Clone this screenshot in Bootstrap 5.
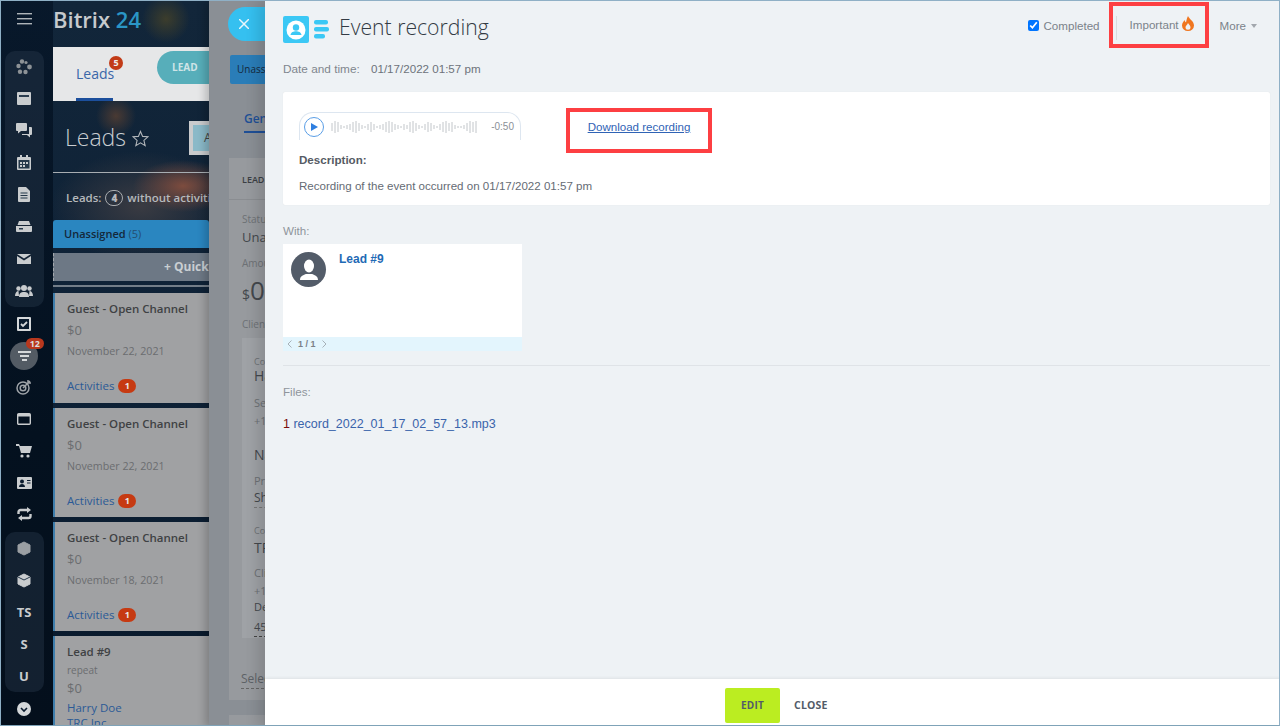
<!DOCTYPE html>
<html lang="en">
<head>
<meta charset="utf-8">
<title>Event recording</title>
<link rel="stylesheet" href="https://cdn.jsdelivr.net/npm/bootstrap@5.3.0/dist/css/bootstrap.min.css">
<style>
html,body{height:100%;margin:0;overflow:hidden}
body{font-family:"Liberation Sans",Arial,sans-serif;font-size:12px;background:#0b1e33}
.shell{width:1280px;height:726px;position:relative;overflow:hidden;border:1px solid #8fb0c6;border-bottom-color:#7fa3b8;
 background:radial-gradient(circle at 165px 18px,#3c3d2c 0,transparent 24px),radial-gradient(circle at 115px 115px,#4a3a33 0,transparent 20px),radial-gradient(ellipse 50px 26px at 182px 185px,#7d4c3e 0,transparent 100%),radial-gradient(ellipse 90px 55px at 140px 205px,#3a3b42 0,transparent 100%),linear-gradient(180deg,#12263a,#0d2035 60%,#08182a)}
.rail{width:52px;background:linear-gradient(180deg,rgba(5,20,38,.75),#04111f 60%,#040f1c);color:#d5d8da;flex:none;padding-top:8px}
.burger{height:20px;margin:4px 0 18px}
.railgroup{width:39px;margin-left:4px;background:rgba(40,58,76,.42);border-radius:10px;padding:0}
.railitem{height:32px;width:38px;font:700 13px "Open Sans",sans-serif;color:#c9ccce}
.railsolo{margin-left:4px}
.firstsolo{margin-top:1px}
.secondgroup{margin-top:2px}
.filterdot{width:28px;height:28px;border-radius:50%;background:#535b64;position:relative}
.countpill{position:absolute;top:-4px;right:-6px;background:#b8381e;color:#ddd;border-radius:8px;font:700 9px/11px "Open Sans",sans-serif;padding:0 4px}
.crm{width:156px;flex:none;font-family:"Open Sans",sans-serif;overflow:hidden}
.logo{height:46px;font:600 22px/36px "Open Sans",sans-serif;color:#c6cacd;white-space:nowrap}
.logo span{color:#2a96c6}
.tabsbar{height:54px;background:#e6e7e8;position:relative;padding:18px 0 0 23px}
.tabname{color:#3a66a8;font-size:14px;line-height:18px;position:relative}
.tabline{height:3px;width:37px;background:#1c4f9c;position:absolute;left:23px;bottom:0}
.tabbadge{position:absolute;left:56px;top:9px;width:14px;height:14px;border-radius:50%;background:#c23b17;color:#eee;font:700 9px/14px "Open Sans",sans-serif;text-align:center}
.leadpill{position:absolute;left:104px;top:4px;width:70px;height:33px;background:#57aeba;border-radius:17px;color:#cfe4e7;font:700 10px/33px "Open Sans",sans-serif;padding-left:15px}
.bigtitle{font:300 23px/32px "Open Sans",sans-serif;color:#c9cdd1;height:72px;padding:20px 0 0 12px;border-bottom:1px solid #a8adb2;position:relative}
.abox{position:absolute;left:136px;top:20px;width:40px;height:34px;background:#8ab9c8;border:4px solid #c9cbcd;color:#444;font:12px/26px "Open Sans",sans-serif;padding-left:11px}
.infoline{color:#b6b9bc;font-size:11.5px;font-weight:600;height:47px;padding:16px 0 0 13px;white-space:nowrap}
.infoline b{display:inline-block;border:1px solid #a9acaf;border-radius:10px;padding:0 5px;font-size:10px;line-height:14px;margin:0 1px}
.stagehead{height:28px;background:#2a86c0;border-radius:3px 3px 0 0;color:#14283a;font-size:11px;font-weight:600;line-height:28px;padding-left:11px}
.stagehead span{font-weight:400;color:#244e70}
.quickadd{height:28px;margin-top:5px;background:#6d7885;color:#c9ced2;font-size:12px;font-weight:700;line-height:28px;padding-left:110px;border-left:1px dashed #a3a8ad;white-space:nowrap}
.thinline{height:2px;background:#737d88;margin:4px 0 6px}
.dealcard{background:#a0a1a3;border-left:2px solid #3f7eac;padding:8px 0 0 12px;height:110px;margin-bottom:5px;color:#6b6d70;font-size:10.7px;white-space:nowrap;position:relative}
.dealcard strong{display:block;color:#3f4144;font-weight:600;font-size:11.5px;line-height:16px;margin-bottom:5px}
.dealcard p{margin:0 0 5px;line-height:16px}
.dealsum{font-size:13px}
.actline{position:absolute;left:12px;top:85px;color:#2b5a96;line-height:16px;font-size:11.5px}
.actline i{display:inline-block;width:18px;height:14px;border-radius:7px;background:#c63a12;color:#e9e9e9;font:700 9px/14px "Open Sans",sans-serif;text-align:center;margin-left:1px;vertical-align:1px}
.dealcard a{color:#2b5a96;font-size:11.5px;line-height:15px}
.middle{position:absolute;left:208px;top:0;width:60px;height:726px;background:#8a8f95;box-shadow:-4px 0 8px rgba(0,0,0,.2);overflow:hidden;font-family:"Open Sans",sans-serif;color:#55595e}
.midtext{position:absolute;left:45px;white-space:nowrap;color:#6d7175;font-size:11px}
.middark{color:#44484d}
.closepill{position:absolute;left:19px;top:6px;width:60px;height:34px;background:#35c0f0;border-radius:17px 0 0 17px;color:#eaf6fb;padding-left:11px;display:flex;align-items:center}
.unasschip{position:absolute;left:21px;top:54px;width:60px;height:29px;background:#2a7db8;border-radius:2px;font-size:10px;line-height:29px;padding-left:7px;color:#15293c;white-space:nowrap}
.gentab{position:absolute;left:35px;top:109px;font-size:12px;color:#1f4f96;font-weight:600}
.genline{position:absolute;left:35px;top:130px;width:30px;height:2px;background:#1f4f96}
.midcard{position:absolute;left:20px;top:157px;width:60px;height:542px;background:#979a9e}
.midcard div{position:absolute;left:13px;white-space:nowrap}
.midinner{position:absolute;left:33px;top:337px;width:40px;height:300px;background:#9fa2a6}
.midnext{position:absolute;left:20px;top:714px;width:60px;height:20px;background:#979a9e}
.mainpanel{position:absolute;left:264px;top:0;width:1016px;height:726px;background:#eef2f5;box-shadow:-8px 0 12px rgba(0,0,0,.12);color:#59606a}
.paneltop{padding:0 24px 0 18px;height:48px}
.appicon{width:26px;height:27px;background:#3bc8f5;border-radius:2px;margin-top:15px}
.applines{margin:19px 0 0 5px}
.panelname{font:300 21.200px/30px "Open Sans",sans-serif;color:#333b44;margin:11px 0 0 10px;white-space:nowrap}
.ctrltext{color:#7b828a;font-size:11.6px}
.ctrlcheck{width:11px;height:11px;margin:0 5px 0 0}
.ctrlopt{margin-top:16px}
.redframe{border:4px solid #fd3f42}
.impframe{width:100px;height:46px;margin:1px 0 0 9px;padding-left:17px;position:relative}
.impframe span{margin-top:-1px}
.flame{margin:-3px 0 0 3px}
.impframe::before{content:"";position:absolute;left:3px;top:10px;height:24px;width:1px;background:#d8dce0}
.caretmark{display:inline-block;width:0;height:0;border:3.5px solid transparent;border-top:4px solid #a2a7ad;border-bottom:0;margin-left:5px;vertical-align:2px}
.moreitem{margin:16px 0 0 11px}
.datefield{padding:12px 0 0 18px;height:43px;color:#80868e;line-height:16px;font-size:11.8px}
.datevalue{color:#6d737b;font-size:11.6px;margin-left:8px}
.eventbox{margin:0 11px 0 18px;height:113px;background:#fff;border:0;border-radius:2px;padding:20px 16px 0;box-shadow:0 0 1px rgba(0,0,0,.1)}
.playerbar{width:222px;height:28px;border:1px solid #dde6f0;border-bottom:0;border-radius:14px 14px 0 0;padding:0 6px 0 4px}
.playbtn{width:20px;height:20px;border:1px solid #5a9ee6;border-radius:50%;flex:none;background:#fff}
.waveform{margin-left:7px;flex:none}
.remain{font-size:10px;color:#8b9097;margin-left:auto}
.downframe{width:146px;height:45px;margin:-4px 0 0 45px;line-height:30px;text-align:center;flex:none}
.downframe a{color:#2f63b5;font-size:11.550px}
.desctitle{font-weight:700;color:#555b64;line-height:16px;font-size:11.6px;margin-top:-1px}
.desctext{margin-top:10px;line-height:16px;color:#656b74;font-size:11.570px}
.fieldlabel{color:#8f959c;line-height:16px;font-size:11.6px}
.withlabel{padding:18px 0 0 18px;height:39px}
.contactbox{width:239px;height:107px;margin-left:18px;background:#fff;position:relative;display:flex;flex-direction:column}
.contactbody{height:93px;padding:8px;display:flex}
.avatarcircle{width:35px;height:35px;border-radius:50%;background:#535c69;flex:none}
.contactname{color:#1f6ab5;font-weight:700;margin-left:13px;line-height:14px}
.pagerstrip{height:14px;background:#e3f5fd;color:#7b8086;font-size:9px;font-weight:700;line-height:14px;padding-left:4px;gap:6px}
.splitline{margin:14px 11px 0 18px;height:1px;background:#dfe3e7}
.fileslabel{padding:18px 0 0 18px;height:50px}
.fileline{padding-left:18px;line-height:16px;font-size:12.5px;color:#7a0c0c}
.fileline a{color:#3a64ab;text-decoration:none}
.panelfoot{position:absolute;left:0;right:0;top:678px;height:48px;background:#fff;box-shadow:0 -1px 3px rgba(0,0,0,.07);padding-left:460px;padding-top:9px}
.editbtn{width:55px;height:35px;background:#bbed21;border:0;border-radius:2px;color:#535c69;font:700 10px/35px "Open Sans",sans-serif;padding:0;letter-spacing:.2px}
.closebtn{margin-left:14px;color:#535c69;font:700 10.500px/35px "Open Sans",sans-serif;letter-spacing:.2px}
</style>
</head>
<body>
<div class="shell d-flex">
  <div class="rail d-flex flex-column align-items-start">
    <div class="burger d-flex justify-content-center" style="width:46px">
      <svg width="15" height="12" viewBox="0 0 15 12" fill="#aeb4b9"><rect width="15" height="1.4"/><rect y="5" width="15" height="1.4"/><rect y="10" width="15" height="1.4"/></svg>
    </div>
    <div class="railgroup">
      <div class="railitem d-flex align-items-center justify-content-center"><svg width="16" height="16" viewBox="0 0 16 16" fill="#8d9296"><circle cx="6" cy="2.500" r="2.200"/><circle cx="2.500" cy="7" r="2.200"/><circle cx="4" cy="12.800" r="2.200"/><circle cx="9.500" cy="13" r="2.200"/><circle cx="13.500" cy="8" r="2.400"/><circle cx="10" cy="3.500" r="1.600"/></svg></div>
      <div class="railitem d-flex align-items-center justify-content-center"><svg width="14" height="13" viewBox="0 0 14 13"><rect width="14" height="13" rx="1" fill="#c9ccce"/><rect x="2" y="3" width="10" height="2" fill="#2b3c4e"/></svg></div>
      <div class="railitem d-flex align-items-center justify-content-center"><svg width="16" height="15" viewBox="0 0 16 15" fill="#c9ccce"><path d="M1 0h9a1 1 0 0 1 1 1v6a1 1 0 0 1-1 1H5L2 10.500V8H1a1 1 0 0 1-1-1V1a1 1 0 0 1 1-1z"/><path d="M13 4h2a1 1 0 0 1 1 1v6a1 1 0 0 1-1 1h-1v2.500L11 12H6v-1h7z"/></svg></div>
      <div class="railitem d-flex align-items-center justify-content-center"><svg width="14" height="15" viewBox="0 0 14 15"><rect y="2" width="14" height="13" rx="1" fill="#c9ccce"/><rect x="3" width="2" height="3" fill="#c9ccce"/><rect x="9" width="2" height="3" fill="#c9ccce"/><rect x="1.500" y="5" width="11" height="8.500" fill="#25384a"/><path d="M3 7h2v2H3zM6 7h2v2H6zM9 7h2v2H9zM3 10h2v2H3zM6 10h2v2H6z" fill="#c9ccce"/></svg></div>
      <div class="railitem d-flex align-items-center justify-content-center"><svg width="12" height="15" viewBox="0 0 12 15"><path d="M1 0h7l4 4v10a1 1 0 0 1-1 1H1a1 1 0 0 1-1-1V1a1 1 0 0 1 1-1z" fill="#c9ccce"/><path d="M2.500 6h7M2.500 8.500h7M2.500 11h7" stroke="#25384a" stroke-width="1.100"/></svg></div>
      <div class="railitem d-flex align-items-center justify-content-center"><svg width="16" height="11" viewBox="0 0 16 11" fill="#c9ccce"><path d="M3 0h10l1.500 4h-13z"/><path d="M0 5h16v5a1 1 0 0 1-1 1H1a1 1 0 0 1-1-1z"/><rect x="3" y="7" width="4" height="1.500" fill="#25384a"/></svg></div>
      <div class="railitem d-flex align-items-center justify-content-center"><svg width="14" height="10" viewBox="0 0 14 10" fill="#c9ccce"><path d="M0 0h14L7 4.500z"/><path d="M0 2l7 4.500L14 2v8H0z"/></svg></div>
      <div class="railitem d-flex align-items-center justify-content-center"><svg width="18" height="12" viewBox="0 0 18 12" fill="#c9ccce"><circle cx="9" cy="3" r="3"/><path d="M4 12c0-4 2-5 5-5s5 1 5 5z"/><circle cx="3.500" cy="3.500" r="2.200"/><circle cx="14.500" cy="3.500" r="2.200"/><path d="M0 11c0-3 1.500-5 3.500-5l.5 5zM18 11c0-3-1.500-5-3.500-5l-.5 5z"/></svg></div>
    </div>
    <div class="railitem railsolo firstsolo d-flex align-items-center justify-content-center"><svg width="14" height="14" viewBox="0 0 14 14"><rect width="14" height="14" rx="1" fill="#d5d8da"/><rect x="2" y="2" width="10" height="10" fill="#0a1b2e"/><path d="M4 7l2 2 4-4" stroke="#d5d8da" stroke-width="1.800" fill="none"/></svg></div>
    <div class="railitem railsolo d-flex align-items-center justify-content-center"><div class="filterdot d-flex align-items-center justify-content-center"><svg width="13" height="10" viewBox="0 0 13 10" fill="#d5d8da"><rect width="13" height="2"/><rect x="2" y="4" width="9" height="2"/><rect x="4" y="8" width="5" height="2"/></svg><span class="countpill">12</span></div></div>
    <div class="railitem railsolo d-flex align-items-center justify-content-center"><svg width="16" height="16" viewBox="0 0 16 16" fill="none" stroke="#9ea3a8" stroke-width="1.500"><circle cx="7" cy="9" r="6"/><circle cx="7" cy="9" r="2.800"/><path d="M7 9l7-7M12 1v3h3"/></svg></div>
    <div class="railitem railsolo d-flex align-items-center justify-content-center"><svg width="14" height="12" viewBox="0 0 14 12"><rect x=".7" y=".7" width="12.600" height="10.600" rx="1" fill="none" stroke="#c9ccce" stroke-width="1.400"/><rect x="1" y="1" width="12" height="2.500" fill="#c9ccce"/></svg></div>
    <div class="railitem railsolo d-flex align-items-center justify-content-center"><svg width="16" height="14" viewBox="0 0 16 14" fill="#c9ccce"><path d="M0 0h3l1 2h12l-2 7H5L3 2H0z"/><circle cx="6" cy="12" r="1.600"/><circle cx="12" cy="12" r="1.600"/></svg></div>
    <div class="railitem railsolo d-flex align-items-center justify-content-center"><svg width="15" height="12" viewBox="0 0 15 12"><rect width="15" height="12" rx="1" fill="#c9ccce"/><circle cx="5" cy="4.500" r="2" fill="#0a1b2e"/><path d="M2 10c0-2 1.500-3 3-3s3 1 3 3z" fill="#0a1b2e"/><path d="M10 3.500h3.500M10 6h3.500" stroke="#0a1b2e" stroke-width="1.200"/></svg></div>
    <div class="railitem railsolo d-flex align-items-center justify-content-center"><svg width="15" height="14" viewBox="0 0 15 14" fill="none" stroke="#c9ccce" stroke-width="2.400"><path d="M1.500 7V5a2 2 0 0 1 2-2h7"/><path d="M13.500 7v2a2 2 0 0 1-2 2h-7"/><path d="M10 0l4 3-4 3zM5 8l-4 3 4 3z" fill="#c9ccce" stroke="none"/></svg></div>
    <div class="railgroup secondgroup">
      <div class="railitem d-flex align-items-center justify-content-center"><svg width="14" height="15" viewBox="0 0 14 15" fill="#9b9fa3" stroke="#9b9fa3" stroke-linejoin="round"><path d="M7 1l6 3v7l-6 3-6-3V4z"/></svg></div>
      <div class="railitem d-flex align-items-center justify-content-center"><svg width="14" height="15" viewBox="0 0 14 15"><path d="M7 1l6 3v7l-6 3-6-3V4z" fill="#c9ccce" stroke="#c9ccce" stroke-linejoin="round"/><path d="M1 4l6 3 6-3" stroke="#25384a" fill="none"/></svg></div>
      <div class="railitem d-flex align-items-center justify-content-center">TS</div>
      <div class="railitem d-flex align-items-center justify-content-center">S</div>
      <div class="railitem d-flex align-items-center justify-content-center">U</div>
    </div>
    <div class="railitem railsolo firstsolo d-flex align-items-center justify-content-center"><svg width="14" height="14" viewBox="0 0 14 14"><circle cx="7" cy="7" r="7" fill="#d5d8da"/><path d="M4 6l3 3 3-3" stroke="#0a1b2e" stroke-width="1.600" fill="none"/></svg></div>
  </div>

  <div class="crm">
    <div class="logo">Bitrix <span>24</span></div>
    <div class="tabsbar">
      <div class="tabname">Leads</div><div class="tabline"></div><div class="tabbadge">5</div><div class="leadpill">LEAD</div>
    </div>
    <div class="bigtitle">Leads <svg width="17" height="17" viewBox="0 0 24 24" fill="none" stroke="#b4b8bc" stroke-width="1.500" style="vertical-align:-1px"><path d="M12 2l3 7 7.500.6-5.700 5 1.800 7.400L12 18l-6.600 4 1.800-7.400-5.700-5L9 9z"/></svg><div class="abox">A</div></div>
    <div class="infoline">Leads: <b>4</b> without activities</div>
    <div class="stagehead">Unassigned <span>(5)</span></div>
    <div class="quickadd">+ Quick</div>
    <div class="thinline"></div>
    <div class="dealcard"><strong>Guest - Open Channel</strong><p class="dealsum">$0</p><p>November 22, 2021</p><div class="actline">Activities <i>1</i></div></div>
    <div class="dealcard" style="height:109px"><strong>Guest - Open Channel</strong><p class="dealsum">$0</p><p>November 22, 2021</p><div class="actline">Activities <i>1</i></div></div>
    <div class="dealcard" style="height:109px"><strong>Guest - Open Channel</strong><p class="dealsum">$0</p><p>November 18, 2021</p><div class="actline">Activities <i>1</i></div></div>
    <div class="dealcard"><strong style="margin-bottom:2px">Lead #9</strong><p style="margin:0 0 2px;font-size:10px">repeat</p><p class="dealsum" style="margin-bottom:4px">$0</p><a class="d-block text-decoration-none">Harry Doe</a><a class="d-block text-decoration-none">TRC Inc.</a></div>
  </div>

  <div class="middle">
    <div class="closepill"><svg width="10" height="10" viewBox="0 0 10 10" stroke="#eaf6fb" stroke-width="1.500"><path d="M0 0l10 10M10 0L0 10"/></svg></div>
    <div class="unasschip">Unassigned</div>
    <div class="gentab">General</div><div class="genline"></div>
    <div class="midcard">
      <div style="top:15px;font-size:9px;font-weight:600;color:#3b3f44">LEAD #9</div>
      <div style="top:41px;left:0;width:60px;height:1px;background:#8a8d91"></div>
      <div style="top:54px;font-size:10px;color:#6d7175">Status</div>
      <div style="top:70px;font-size:13px;color:#44484d">Unassigned</div>
      <div style="top:98px;font-size:10px;color:#6d7175">Amount</div>
      <div style="top:114px;font-size:14px;color:#44484d">$<span style="font-size:26px;line-height:36px">0</span></div>
      <div style="top:159px;font-size:10px;color:#6d7175">Client</div>
    </div>
    <div class="midinner"></div>
    <div class="midnext"></div>
    <div class="midtext" style="top:354px;font-size:9px">Contact</div>
    <div class="midtext middark" style="top:364px;font-size:14px">Harry</div>
    <div class="midtext" style="top:394px">Second</div>
    <div class="midtext" style="top:412px">+1</div>
    <div class="midtext middark" style="top:443px;font-size:14px">Name</div>
    <div class="midtext" style="top:472px">Price</div>
    <div class="midtext middark" style="top:488px;font-size:12px;border-bottom:1px dashed #777">Shop</div>
    <div class="midtext" style="top:523px;font-size:9px">Company</div>
    <div class="midtext middark" style="top:536px;font-size:14px">TRC</div>
    <div class="midtext" style="top:564px">Client</div>
    <div class="midtext" style="top:582px">+1</div>
    <div class="midtext middark" style="top:598px">Deal</div>
    <div class="midtext middark" style="top:618px;border-bottom:1px dashed #444">45</div>
    <div class="midtext" style="left:32px;top:669px;font-size:12px;color:#5e6267;border-bottom:1px dashed #666">Select</div>
  </div>

  <div class="mainpanel d-flex flex-column">
    <div class="paneltop d-flex align-items-start">
      <div class="appicon d-flex align-items-center justify-content-center"><svg width="20" height="20" viewBox="0 0 20 20"><circle cx="10" cy="10" r="9.500" fill="#fff"/><circle cx="10" cy="7.500" r="3.200" fill="#3bc8f5"/><path d="M4.500 15c.5-3 3-3.800 5.500-3.800s5 .8 5.500 3.800z" fill="#3bc8f5"/></svg></div>
      <svg class="applines" width="15" height="19" viewBox="0 0 15 19" fill="#3bc8f5"><rect y="0" width="14" height="4.500" rx="2"/><rect y="7" width="15" height="4.500" rx="2"/><rect y="14" width="11" height="4.500" rx="2"/></svg>
      <div class="panelname">Event recording</div>
      <div class="ms-auto d-flex align-items-start">
        <label class="ctrltext ctrlopt d-flex align-items-center"><input class="ctrlcheck" type="checkbox" checked>Completed</label>
        <div class="redframe impframe ctrltext d-flex align-items-center"><span>Important</span>
          <svg class="flame" width="12" height="15" viewBox="0 0 12 15"><path d="M6 0c1 3 6 5 6 9.500A6 5.500 0 0 1 0 9.500C0 7 1.500 5.500 2.500 4c.5 1.500 1 2 1.500 2.500C4.500 4 5 2 6 0z" fill="#f0761f"/><path d="M6 7c.7 1.500 2.500 2.500 2.500 4.300a2.500 2.500 0 0 1-5 0C3.500 9.800 5.400 8.800 6 7z" fill="#eef2f5"/></svg>
        </div>
        <div class="ctrltext moreitem">More<span class="caretmark"></span></div>
      </div>
    </div>
    <div class="datefield">Date and time: <span class="datevalue">01/17/2022 01:57 pm</span></div>
    <div class="eventbox">
      <div class="d-flex">
        <div class="playerbar d-flex align-items-center">
          <div class="playbtn d-flex align-items-center justify-content-center"><svg width="7" height="8" viewBox="0 0 7 8" fill="#2f7fe0"><path d="M0 0l7 4-7 4z"/></svg></div>
          <svg class="waveform" width="146" height="16" viewBox="0 0 146 16" stroke="#c2c6ca" stroke-width="1">
            <path d="M1 4v8M4 2v12M7 3v10M10 6v4M13 7v2M16 6v4M19 5v6M22 3v10M25 2v12M28 4v8M31 6v4M34 7v2M37 5v6M40 3v10M43 5v6M46 7v2M49 6v4M52 5v6M55 3v10M58 2v12M61 3v10M64 5v6M67 6v4M70 7v2M73 5v6M76 6v4M79 3v10M82 2v12M85 4v8M88 6v4M91 7v2M94 5v6M97 3v10M100 4v8M103 6v4M106 7v2M109 5v6M112 3v10M115 2v12M118 4v8M121 3v10M124 6v4M127 7v2M130 7v2M133 6v4M136 4v8M139 2v12M142 3v10M145 2v12"/>
          </svg>
          <span class="remain">-0:50</span>
        </div>
        <div class="downframe redframe"><a href="#">Download recording</a></div>
      </div>
      <div class="desctitle">Description:</div>
      <div class="desctext">Recording of the event occurred on 01/17/2022 01:57 pm</div>
    </div>
    <div class="withlabel fieldlabel">With:</div>
    <div class="contactbox">
      <div class="contactbody">
        <div class="avatarcircle d-flex align-items-center justify-content-center"><svg width="20" height="22" viewBox="0 0 20 22" fill="#fff"><ellipse cx="10" cy="7" rx="5" ry="6.500"/><path d="M1 21c0-4.500 4-5 6-6h6c2 1 6 1.500 6 6z"/></svg></div>
        <div class="contactname">Lead #9</div>
      </div>
      <div class="pagerstrip d-flex align-items-center"><svg width="5" height="8" viewBox="0 0 5 8" fill="none" stroke="#a7b1b8"><path d="M4.500.5L1 4l3.500 3.500"/></svg><span>1 / 1</span><svg width="5" height="8" viewBox="0 0 5 8" fill="none" stroke="#a7b1b8"><path d="M.5.5L4 4 .5 7.500"/></svg></div>
    </div>
    <div class="splitline"></div>
    <div class="fileslabel fieldlabel">Files:</div>
    <div class="fileline">1 <a href="#">record_2022_01_17_02_57_13.mp3</a></div>
    <div class="panelfoot d-flex align-items-start">
      <button class="btn editbtn" type="button">EDIT</button>
      <span class="closebtn">CLOSE</span>
    </div>
  </div>
</div>
</body>
</html>
